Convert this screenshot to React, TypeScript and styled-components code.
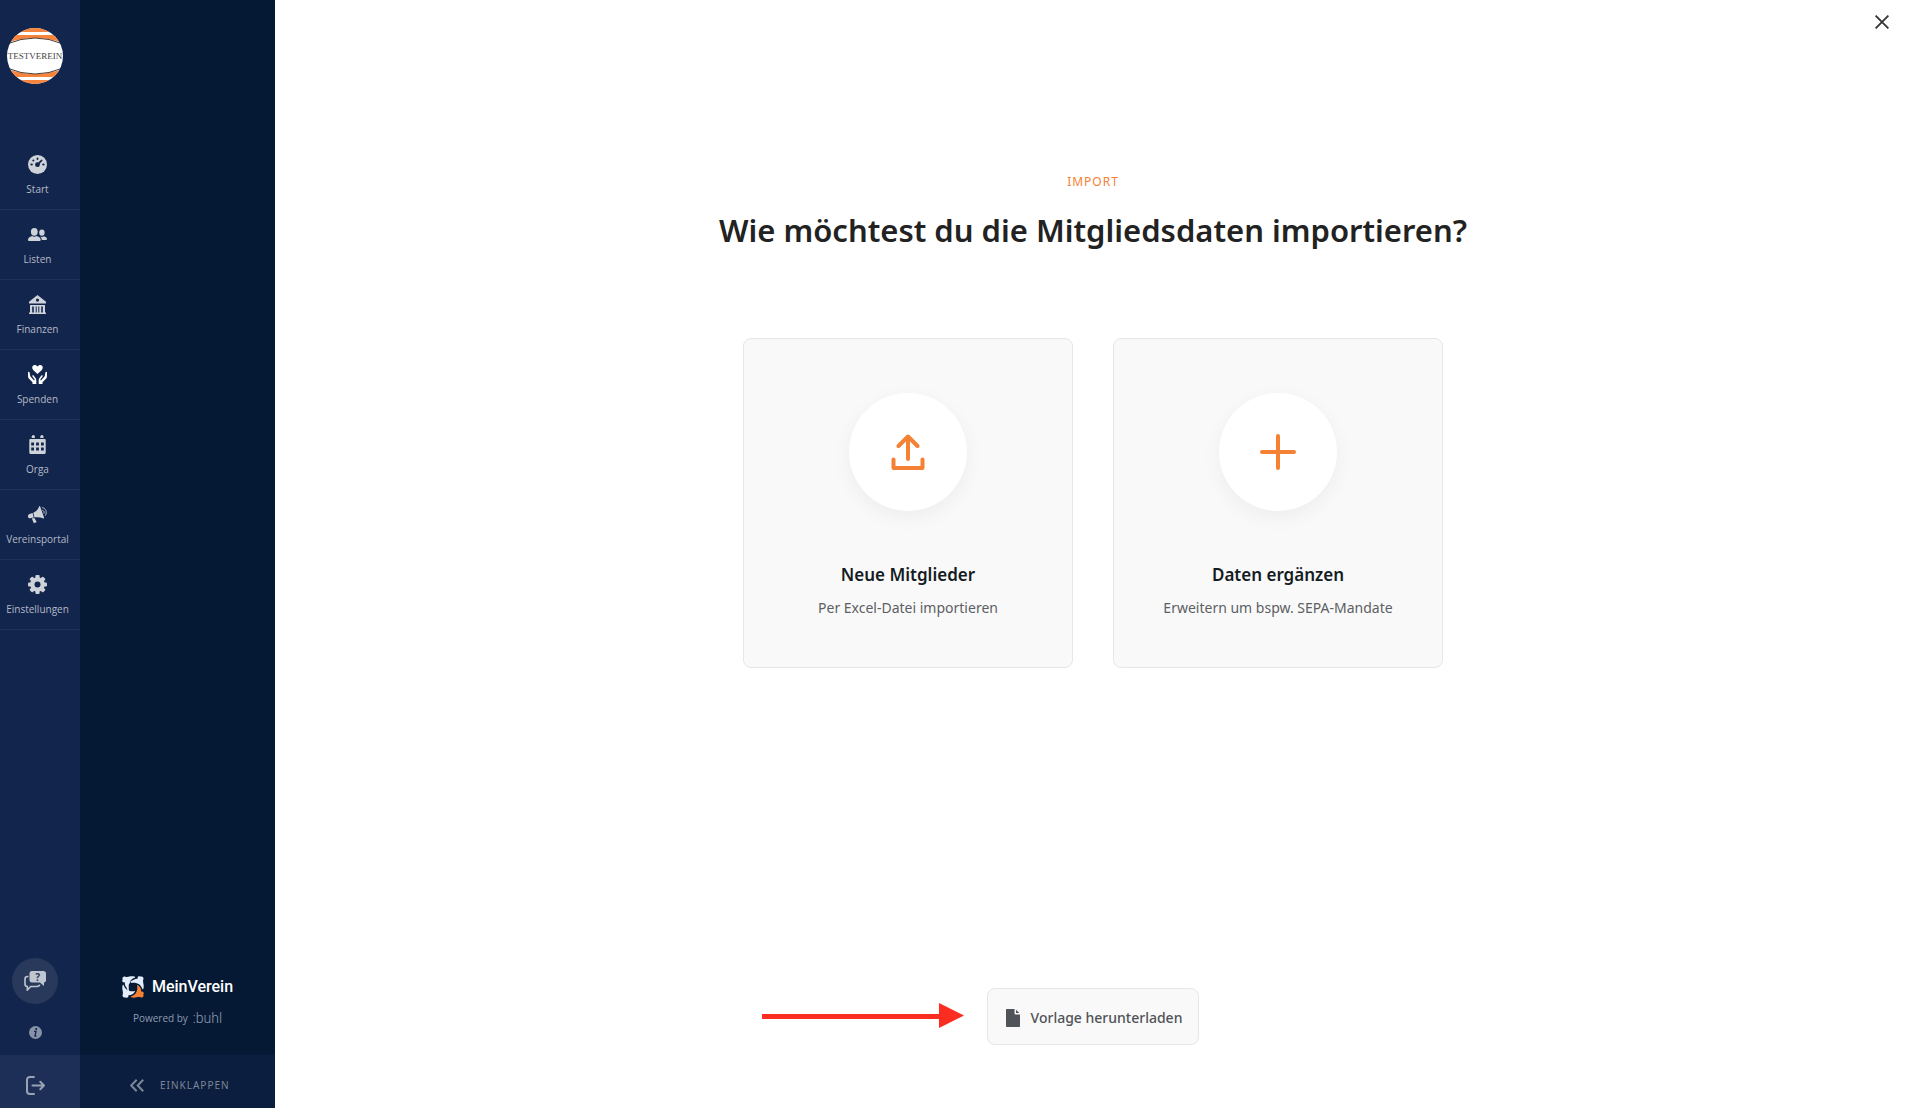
import React from "react";
import styled, { createGlobalStyle, css } from "styled-components";

const GlobalStyle = createGlobalStyle`
  *, *::before, *::after { box-sizing: border-box; }
  body {
    margin: 0;
    background: #fff;
    color: #222;
    font-family: "Noto Sans", "Open Sans", sans-serif;
  }
  button {
    margin: 0;
    padding: 0;
    border: 0;
    background: none;
    color: inherit;
    font: inherit;
    cursor: pointer;
  }
  a { color: inherit; text-decoration: none; }
  svg { display: block; flex: none; }
`;

const Shell = styled.div`
  display: grid;
  grid-template-columns: 80px 195px minmax(0, 1fr);
  min-height: 100vh;
`;

const column = css`
  display: flex;
  flex-direction: column;
`;

const smallText = css`
  font-family: "Open Sans", "Noto Sans", sans-serif;
  font-size: 10px;
`;

/* ---------- icon rail ---------- */

const Rail = styled.aside`
  ${column}
  background: #12254c;
`;

const ClubLink = styled.a`
  display: block;
  padding: 28px 7px 56px;
`;

const RailList = styled.ul`
  margin: 0;
  padding: 0;
  list-style: none;
`;

const RailItem = styled.li`
  border-bottom: 1px solid #1f3158;
`;

const RailLink = styled.a<{ $active?: boolean }>`
  ${column}
  align-items: center;
  gap: 8px;
  height: 69px;
  padding: 15px 5px 0 0;
  color: ${(p) => (p.$active ? "#fff" : "#ced2d9")};
`;

const RailLabel = styled.span`
  ${smallText}
  line-height: 14px;
  color: #b4bac7;
`;

const RailTools = styled.div`
  ${column}
  align-items: center;
  gap: 22px;
  margin-top: auto;
  padding: 0 10px 16px 0;
`;

const ChatButton = styled.button`
  display: grid;
  place-items: center;
  width: 46px;
  height: 46px;
  border-radius: 50%;
  background: #28395c;
  color: #c0c6cf;
`;

const InfoButton = styled.button`
  color: #8792a8;
`;

const LogoutButton = styled.button`
  display: grid;
  place-items: center;
  height: 53px;
  padding: 7px 10px 0 0;
  background: #1d2f56;
  color: #9aa3b4;
`;

/* ---------- section panel ---------- */

const Panel = styled.aside`
  ${column}
  background: #051934;
`;

const Brand = styled.div`
  ${column}
  align-items: center;
  gap: 9px;
  margin-top: auto;
  padding-bottom: 27px;
`;

const BrandRow = styled.div`
  display: flex;
  align-items: center;
  gap: 8px;
  font-family: Roboto, sans-serif;
  font-size: 16px;
  font-weight: 500;
  line-height: 24px;
  color: #fff;
`;

const Powered = styled.div`
  ${smallText}
  display: flex;
  align-items: center;
  gap: 5px;
  line-height: 20px;
  color: #8f9bb0;
`;

const Buhl = styled.span`
  font-family: Roboto, sans-serif;
  font-size: 14px;
  font-weight: 300;
`;

const CollapseButton = styled.button`
  display: flex;
  align-items: center;
  gap: 16px;
  height: 53px;
  padding: 7px 0 0 50px;
  background: #0c1e3f;
  font-size: 10px;
  line-height: 14px;
  letter-spacing: 1px;
  color: #7d8696;
`;

/* ---------- main ---------- */

const Main = styled.main`
  ${column}
  align-items: center;
  padding: 0 0 63px 5px;
`;

const TopBar = styled.div`
  display: flex;
  justify-content: flex-end;
  align-self: stretch;
  padding: 15px 17px 0 0;
  color: #333;
`;

const Eyebrow = styled.p`
  margin: 144px 0 0;
  font-size: 12px;
  line-height: 18px;
  letter-spacing: 1px;
  color: #f58134;
`;

const Title = styled.h1`
  margin: 15px 0 0;
  font-size: 31px;
  font-weight: 600;
  line-height: 48px;
  text-align: center;
`;

const Cards = styled.div`
  display: flex;
  flex-wrap: wrap;
  justify-content: center;
  gap: 40px;
  margin: 84px 0 40px;
`;

const Card = styled.button`
  ${column}
  align-items: center;
  width: 330px;
  padding: 54px 16px 49px;
  border: 1px solid #e6e6e6;
  border-radius: 8px;
  background: #f9f9f9;
`;

const Disc = styled.span`
  display: grid;
  place-items: center;
  width: 118px;
  height: 118px;
  margin-bottom: 52px;
  border-radius: 50%;
  background: #fff;
  box-shadow: 0 6px 20px rgba(0, 0, 0, 0.05);
  color: #f58134;
`;

const CardTitle = styled.span`
  font-size: 17px;
  font-weight: 600;
  line-height: 24px;
  color: #141b22;
`;

const CardText = styled.span`
  margin-top: 11px;
  font-size: 14px;
  line-height: 20px;
  color: #5c5f63;
`;

const Footer = styled.div`
  position: relative;
  margin-top: auto;
`;

const Download = styled.button`
  display: flex;
  align-items: center;
  gap: 11px;
  height: 57px;
  padding: 2px 16px 0 18px;
  border: 1px solid #e6e6e6;
  border-radius: 8px;
  background: #f9f9f9;
  font-size: 14px;
  font-weight: 500;
  line-height: 20px;
  color: #505357;
`;

const Pointer = styled.svg`
  position: absolute;
  right: calc(100% + 23px);
  top: 15px;
`;

/* ---------- drawings ---------- */

const ClubLogo = () => (
  <svg width="56" height="56" viewBox="0 0 56 56" role="img" aria-label="Testverein">
    <clipPath id="club"><circle cx="28" cy="28" r="28" /></clipPath>
    <g clipPath="url(#club)">
      <rect width="56" height="56" fill="#fff" />
      <path d="M0 0h56v4H0zM0 7h56v8Q28 5 0 15zM0 52h56v4H0zM0 49h56v-8Q28 51 0 41z" fill="#f6843c" />
      <path d="M0 16Q28 4 56 16M0 40Q28 52 56 40" fill="none" stroke="#4a4038" />
    </g>
    <text x="28" y="31" textAnchor="middle" fontFamily="Liberation Serif, serif" fontSize="9" fill="#444">TESTVEREIN</text>
  </svg>
);

const Svg19 = ({ children }: { children: React.ReactNode }) => (
  <svg width="19" height="19" viewBox="0 0 19 19" fill="currentColor" aria-hidden="true">{children}</svg>
);

const GaugeIcon = () => (
  <Svg19>
    <circle cx="9.5" cy="9.5" r="9.5" />
    <g fill="#12254c">
      <circle cx="9.5" cy="9.7" r="2.4" />
      <ellipse cx="3.6" cy="9.5" rx="1.3" ry="0.9" />
      <ellipse cx="15.4" cy="9.5" rx="1.3" ry="0.9" />
      <ellipse cx="9.5" cy="3.7" rx="0.9" ry="1.3" />
      <circle cx="5.3" cy="5.6" r="1" />
    </g>
    <path d="M9.8 9.4 13.7 5.4" stroke="#12254c" strokeWidth="1.6" strokeLinecap="round" />
  </Svg19>
);

const PeopleIcon = () => (
  <Svg19>
    <ellipse cx="6.3" cy="6.8" rx="3.4" ry="3.9" />
    <path d="M0 14.8C0 12.4 2.4 11.5 4.2 11 5.5 11.9 7.1 11.9 8.4 11 10.4 11.5 12.7 12.4 12.7 14.8 12.7 15.6 12.2 16 11.5 16H1.2C.5 16 0 15.6 0 14.8z" />
    <ellipse cx="13.9" cy="7.6" rx="2.7" ry="3.2" />
    <path d="M12 11.3c1.2.8 2.7.8 3.9 0 1.6.5 3.1 1.2 3.1 2.8 0 .6-.4.9-.9.9h-4.3c-.1-1.6-.8-2.6-1.8-3.7z" />
  </Svg19>
);

const BankIcon = () => (
  <Svg19>
    <path fillRule="evenodd" d="M9.5 0 18 6.7v1.9H1V6.7zM9.5 3.5a1.6 1.6 0 1 0 0 3.2 1.6 1.6 0 0 0 0-3.2z" />
    <path fillRule="evenodd" d="M2 10h15v7.5h1V19H1v-1.5h1zM4.2 11.5v6h1.6v-6zM7.7 11.5v6h1v-6zM10.3 11.5v6h1v-6zM13.2 11.5v6h1.6v-6z" />
  </Svg19>
);

const HandsIcon = () => (
  <Svg19>
    <path d="M9.5 9 5.2 4.9C3.3 2.9 4.4.2 6.7.1c1.2 0 2.2.6 2.8 1.5C10.1.7 11.1.1 12.3.1c2.3.1 3.4 2.8 1.5 4.8z" />
    <path d="M0 7.5C0 6.5 1.4 6.5 1.6 7.5L2.3 11.2 5.6 15c.6.6 1.3-.1.9-.8L4.3 11.3c-.4-.9.7-1.5 1.3-.9l2.1 2.8c.4.6.6 1.2.6 1.9V19H4.5v-1.8L.8 13.5C.3 13 .2 12.3.1 11.7z" />
    <path d="M19 7.5c0-1-1.4-1-1.6 0l-.7 3.7L13.4 15c-.6.6-1.3-.1-.9-.8l2.2-2.9c.4-.9-.7-1.5-1.3-.9l-2.1 2.8c-.4.6-.6 1.2-.6 1.9V19h3.8v-1.8l3.7-3.7c.5-.5.6-1.2.7-1.8z" />
  </Svg19>
);

const CalendarIcon = () => (
  <Svg19>
    <path d="M3.7 3V1.6a1.6 1.6 0 0 1 3.2 0V3zM12.3 3V1.6a1.6 1.6 0 0 1 3.2 0V3z" />
    <path fillRule="evenodd" d="M2.5 4h14c.7 0 1.2.5 1.2 1.2v12.3c0 .8-.6 1.5-1.5 1.5H2.8c-.9 0-1.5-.7-1.5-1.5V5.2C1.3 4.5 1.8 4 2.5 4zM3.2 7.5v3H6v-3zM8.1 7.5v3h2.8v-3zM13 7.5v3h2.8v-3zM3.2 12.5v3H6v-3zM8.1 12.5v3h2.8v-3zM13 12.5v3h2.8v-3z" />
  </Svg19>
);

const MegaphoneIcon = () => (
  <Svg19>
    <path d="M4.6 8.1 5.7 12.4 2.3 13.3C-.3 13.6-1 10 1.5 9zM5.3 7.8C8.5 6.4 10.2 4.2 11.2 1.3L12 1l4.2 12-.6.5C12.7 12.3 9.7 11.8 6.5 12.4z" />
    <path d="M3.8 13.6 6.4 12.9 8.7 17 5.9 18.3z" />
    <path d="M14.3 5.4c1.7.3 2.3 1.9 1.5 3.2M14 2.7c3.6.3 5.5 4.2 3.3 7.9" fill="none" stroke="currentColor" strokeWidth="0.9" />
  </Svg19>
);

const GearIcon = () => (
  <Svg19>
    {[0, 45, 90, 135].map((a) => (
      <rect key={a} x="7.4" y="0" width="4.2" height="19" rx="1" transform={`rotate(${a} 9.5 9.5)`} />
    ))}
    <circle cx="9.5" cy="9.5" r="7.3" />
    <circle cx="9.5" cy="9.5" r="3" fill="#12254c" />
  </Svg19>
);

const ChatIcon = () => (
  <svg width="22" height="20" viewBox="0 0 22 20" aria-hidden="true">
    <path d="M8 0h11.5C21 0 22 1 22 2.5V9c0 1.5-.8 2.5-2 2.5V15l-4-3.5H8C6.5 11.5 5.5 10.5 5.5 9V2.5C5.5 1 6.5 0 8 0z" fill="currentColor" />
    <path d="M4.5 5.5H3.5C2 5.5 1 6.5 1 8v5c0 1.5.8 2.5 2.3 2.5V19l3.5-3.5H13c1.5 0 2.5-.7 2.7-1.8" fill="none" stroke="currentColor" strokeWidth="1.6" />
    <text x="13.7" y="9.5" textAnchor="middle" fontSize="10" fontWeight="700" fill="#28395c">?</text>
  </svg>
);

const InfoIcon = () => (
  <svg width="13" height="13" viewBox="0 0 13 13" aria-hidden="true">
    <circle cx="6.5" cy="6.5" r="6.5" fill="currentColor" />
    <circle cx="7.2" cy="3" r="1.1" fill="#12254c" />
    <path d="M5 5.4h2L6 10h1.4" fill="none" stroke="#12254c" strokeWidth="1.3" />
  </svg>
);

const LogoutIcon = () => (
  <svg width="19" height="19" viewBox="0 0 19 19" fill="none" stroke="currentColor" strokeWidth="2" strokeLinecap="round" strokeLinejoin="round" aria-hidden="true">
    <path d="M8 1H4C2.2 1 1 2.2 1 4v11c0 1.8 1.2 3 3 3h4M6.5 9.5H18M14.3 5.8 18 9.5l-3.7 3.7" />
  </svg>
);

const BrandMark = () => (
  <svg width="22" height="22" viewBox="0 0 22 22" aria-hidden="true">
    {[0, 90, 180, 270].map((a) => (
      <path
        key={a}
        transform={`rotate(${a} 11 11)`}
        fill={a === 0 ? "#f58134" : "#e3edfb"}
        d="M15 8.8C18.3 10.3 19.3 13 19.2 15.7 21.2 15 22.3 16.7 21.4 18.4 22 20.6 20.6 22 18.6 21.3 16 20.3 13.5 22.6 9 21.3 8.5 21 8.7 20.5 9.3 20.3 14 18.8 16.2 14.5 15 8.8z"
      />
    ))}
    <path d="M6.5 14.5A5.7 5.7 0 0 1 7.5 6.5M14 5.9A5.7 5.7 0 0 0 9 5.6" fill="none" stroke="#e3edfb" strokeWidth="1.3" strokeLinecap="round" />
  </svg>
);

const ChevronsIcon = () => (
  <svg width="14" height="13" viewBox="0 0 14 13" fill="none" stroke="currentColor" strokeWidth="2" aria-hidden="true">
    <path d="M6.7.8 1.2 6.5l5.5 5.7M13.2.8 7.7 6.5l5.5 5.7" />
  </svg>
);

const CloseIcon = () => (
  <svg width="14" height="14" viewBox="0 0 14 14" fill="none" stroke="currentColor" strokeWidth="1.8" aria-hidden="true">
    <path d="M.6.6 13.4 13.4M13.4.6.6 13.4" />
  </svg>
);

const UploadIcon = () => (
  <svg width="36" height="36" viewBox="0 0 36 36" fill="none" stroke="currentColor" strokeWidth="4" strokeLinecap="round" strokeLinejoin="round" aria-hidden="true">
    <path d="M18 25V2.5M8.5 12 18 2.5 27.5 12M3.5 25.5V34h29v-8.5" />
  </svg>
);

const PlusIcon = () => (
  <svg width="36" height="36" viewBox="0 0 36 36" fill="none" stroke="currentColor" strokeWidth="4" strokeLinecap="round" aria-hidden="true">
    <path d="M18 2v32M2 18h32" />
  </svg>
);

const FileIcon = () => (
  <svg width="14" height="18" viewBox="0 0 14 18" fill="currentColor" aria-hidden="true">
    <path d="M1 0h7.5v4c0 1 .5 1.5 1.5 1.5h4V17c0 .6-.4 1-1 1H1c-.6 0-1-.4-1-1V1c0-.6.4-1 1-1z" />
    <path d="M10 .8 13.3 4H10z" />
  </svg>
);

const sections = [
  { label: "Start", Icon: GaugeIcon },
  { label: "Listen", Icon: PeopleIcon },
  { label: "Finanzen", Icon: BankIcon },
  { label: "Spenden", Icon: HandsIcon, active: true },
  { label: "Orga", Icon: CalendarIcon },
  { label: "Vereinsportal", Icon: MegaphoneIcon },
  { label: "Einstellungen", Icon: GearIcon },
];

const options = [
  { title: "Neue Mitglieder", text: "Per Excel-Datei importieren", Icon: UploadIcon },
  { title: "Daten ergänzen", text: "Erweitern um bspw. SEPA-Mandate", Icon: PlusIcon },
];

export default function App() {
  return (
    <>
      <GlobalStyle />
      <Shell>
        <Rail>
          <ClubLink href="#"><ClubLogo /></ClubLink>
          <nav>
            <RailList>
              {sections.map(({ label, Icon, active }) => (
                <RailItem key={label}>
                  <RailLink href="#" $active={active}>
                    <Icon />
                    <RailLabel>{label}</RailLabel>
                  </RailLink>
                </RailItem>
              ))}
            </RailList>
          </nav>
          <RailTools>
            <ChatButton type="button" aria-label="Hilfe"><ChatIcon /></ChatButton>
            <InfoButton type="button" aria-label="Info"><InfoIcon /></InfoButton>
          </RailTools>
          <LogoutButton type="button" aria-label="Abmelden"><LogoutIcon /></LogoutButton>
        </Rail>

        <Panel>
          <Brand>
            <BrandRow><BrandMark />MeinVerein</BrandRow>
            <Powered>Powered by <Buhl>:buhl</Buhl></Powered>
          </Brand>
          <CollapseButton type="button"><ChevronsIcon />EINKLAPPEN</CollapseButton>
        </Panel>

        <Main>
          <TopBar>
            <button type="button" aria-label="Schließen"><CloseIcon /></button>
          </TopBar>
          <Eyebrow>IMPORT</Eyebrow>
          <Title>Wie möchtest du die Mitgliedsdaten importieren?</Title>
          <Cards>
            {options.map(({ title, text, Icon }) => (
              <Card key={title} type="button">
                <Disc><Icon /></Disc>
                <CardTitle>{title}</CardTitle>
                <CardText>{text}</CardText>
              </Card>
            ))}
          </Cards>
          <Footer>
            <Pointer width="202" height="25" viewBox="0 0 202 25" fill="#fb2c20" aria-hidden="true">
              <path d="M0 11h177V0l25 12.5L177 25v-9H0z" />
            </Pointer>
            <Download type="button"><FileIcon />Vorlage herunterladen</Download>
          </Footer>
        </Main>
      </Shell>
    </>
  );
}
